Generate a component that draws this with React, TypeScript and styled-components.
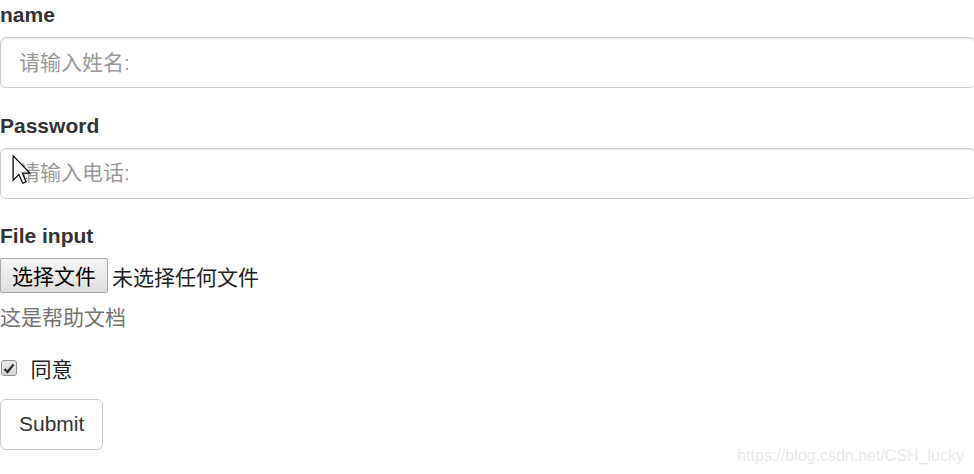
import React from "react";
import styled, { createGlobalStyle } from "styled-components";

const Global = createGlobalStyle`
  html, body { margin: 0; padding: 0; background: #fff; }
  body {
    font-family: "Liberation Sans", Arial, "Noto Sans CJK SC", sans-serif;
    font-size: 21px;
    line-height: 30px;
    color: #333;
  }
  * { box-sizing: border-box; }
`;

const Page = styled.div`
  position: relative;
  width: 974px;
  height: 474px;
  overflow: hidden;
`;

const Form = styled.form`
  width: 976px;
`;

const Group = styled.div`
  margin-bottom: 22.5px;
`;

const Label = styled.label`
  display: block;
  font-weight: 700;
  margin-bottom: 7px;
  line-height: 30px;
`;

const Input = styled.input`
  display: block;
  width: 100%;
  height: 51px;
  padding: 9px 18px;
  font-family: "Liberation Sans", Arial, "Noto Sans CJK SC", sans-serif;
  font-size: 21px;
  color: #555;
  background: #fff;
  border: 1.5px solid #ccc;
  border-radius: 6px;
  box-shadow: inset 0 1.5px 1.5px rgba(0, 0, 0, 0.075);
  outline: none;
  &::placeholder { color: #999; }
`;

const InputWrap = styled.div`
  position: relative;
`;

const Cursor = styled.svg`
  position: absolute;
  left: 12px;
  top: 7px;
  pointer-events: none;
`;

const FileRow = styled.div`
  display: flex;
  align-items: center;
  height: 35px;
  gap: 4px;
`;

const FileButton = styled.button`
  height: 35px;
  padding: 0 11px;
  font-family: "Noto Sans CJK SC", sans-serif;
  font-size: 21px;
  line-height: 33px;
  color: #000;
  background: linear-gradient(#f6f6f6, #dedede);
  border: 1px solid #a9a9a9;
  border-radius: 2px;
`;

const FileText = styled.span`
  font-family: "Noto Sans CJK SC", sans-serif;
  color: #222;
  font-size: 21px;
`;

const Help = styled.p`
  margin: 7.5px 0 15px;
  color: #737373;
  font-family: "Noto Sans CJK SC", sans-serif;
  line-height: 30px;
`;

const CheckGroup = styled.div`
  min-height: 30px;
  margin-bottom: 15.5px;
`;

const CheckLabel = styled.label`
  display: flex;
  align-items: center;
  gap: 14px;
  line-height: 30px;
  font-family: "Noto Sans CJK SC", sans-serif;
  color: #222;
`;

const Box = styled.span`
  display: inline-flex;
  align-items: center;
  justify-content: center;
  width: 16px;
  height: 16px;
  margin-left: 0.5px;
  border: 1px solid #8f8f8f;
  border-radius: 3px;
  background: linear-gradient(#ececec, #d6d6d6);
`;

const SubmitButton = styled.button`
  display: inline-block;
  height: 51px;
  padding: 9px 18px;
  font-family: "Liberation Sans", Arial, sans-serif;
  font-size: 21px;
  line-height: 30px;
  color: #333;
  background: #fff;
  border: 1.5px solid #ccc;
  border-radius: 6px;
`;

const Watermark = styled.div`
  position: absolute;
  right: 10px;
  bottom: 8px;
  font-family: "Liberation Sans", Arial, sans-serif;
  font-size: 16px;
  line-height: 20px;
  color: #e8e8e8;
`;

export default function App() {
  return (
    <Page>
      <Global />
      <Form onSubmit={(e) => e.preventDefault()}>
        <Group>
          <Label>name</Label>
          <Input placeholder="请输入姓名:" />
        </Group>
        <Group>
          <Label>Password</Label>
          <InputWrap>
            <Input placeholder="请输入电话:" />
            <Cursor width="19" height="29" viewBox="0 0 12 19">
              <path
                d="M0.5 0.5 L0.5 16.5 L4.3 12.8 L6.8 18.5 L9 17.5 L6.6 11.9 L11.5 11.9 Z"
                fill="#fff"
                stroke="#000"
                strokeWidth="0.8"
                strokeLinejoin="miter"
              />
            </Cursor>
          </InputWrap>
        </Group>
        <Group>
          <Label>File input</Label>
          <FileRow>
            <FileButton type="button">选择文件</FileButton>
            <FileText>未选择任何文件</FileText>
          </FileRow>
          <Help>这是帮助文档</Help>
        </Group>
        <CheckGroup>
          <CheckLabel>
            <Box>
              <svg width="12" height="11" viewBox="0 0 12 11">
                <path d="M1.5 6 L4.5 9 L10.5 1.5" fill="none" stroke="#333" strokeWidth="2.4" />
              </svg>
            </Box>
            同意
          </CheckLabel>
        </CheckGroup>
        <SubmitButton type="submit">Submit</SubmitButton>
      </Form>
      <Watermark>https://blog.csdn.net/CSH_lucky</Watermark>
    </Page>
  );
}
